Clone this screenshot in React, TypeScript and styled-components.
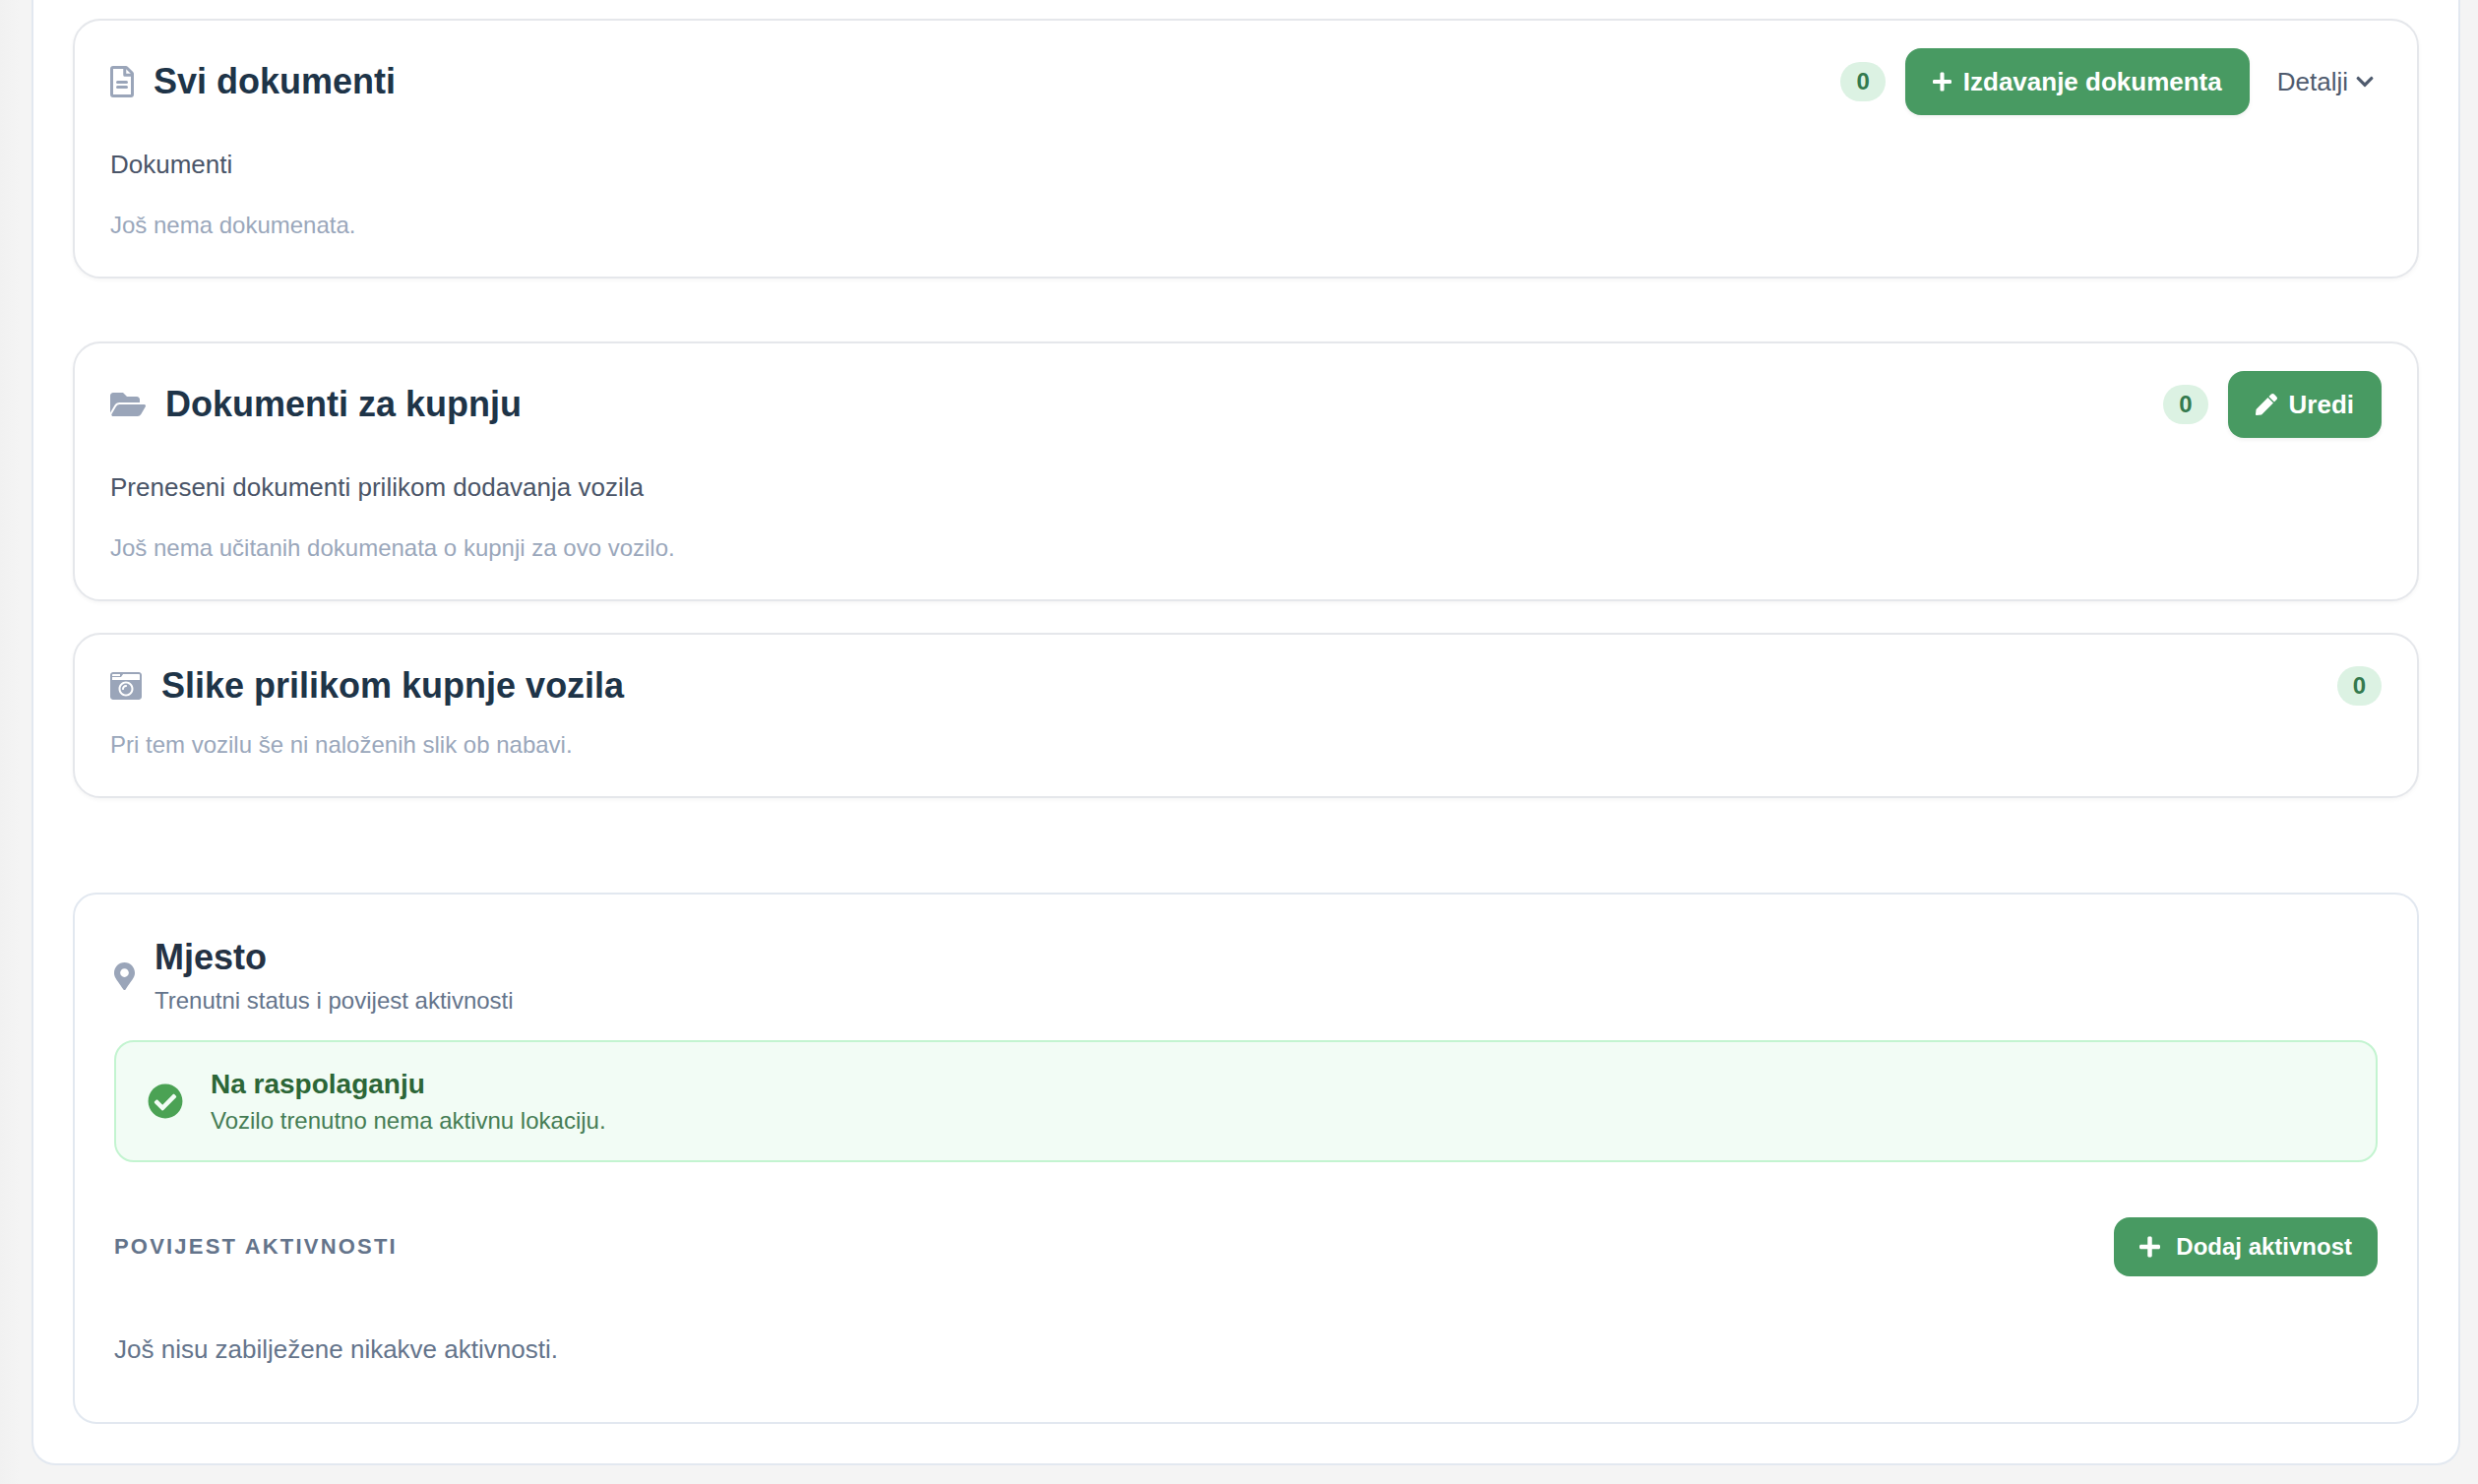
import React from 'react';
import styled, { createGlobalStyle } from 'styled-components';
import { FaFolderOpen, FaCameraRetro, FaMapMarkerAlt, FaCheckCircle, FaPlus, FaPen, FaChevronDown } from 'react-icons/fa';

const GlobalStyle = createGlobalStyle`
  *, *::before, *::after { box-sizing: border-box; }
  body {
    margin: 0;
    background: #f4f4f4;
    font-family: "Liberation Sans", Arial, sans-serif;
    color: #4a5568;
  }
  h2, h3, p { margin: 0; }
`;

const Page = styled.div`
  padding: 0 18px 19px 32px;
  background: linear-gradient(90deg, #f1f1f1 0, #f4f4f4 20px);
`;

const Panel = styled.main`
  display: flex;
  flex-direction: column;
  padding: 19px 40px 40px;
  background: #fff;
  border: 2px solid #e2e8f0;
  border-top: 0;
  border-radius: 0 0 24px 24px;
`;

const Card = styled.section<{ $after: number }>`
  padding: 28px 36px 34px;
  margin-bottom: ${(p) => p.$after}px;
  background: #fff;
  border: 2px solid #e5e7eb;
  border-radius: 28px;
  box-shadow: 0 2px 4px rgba(0, 0, 0, 0.04);
`;

const LocationCard = styled.section`
  padding: 40px;
  background: #fff;
  border: 2px solid #e2e8f0;
  border-radius: 24px;
`;

const Header = styled.header`
  display: flex;
  align-items: center;
  justify-content: space-between;
`;

const Title = styled.h2`
  display: flex;
  align-items: center;
  gap: 20px;
  font-size: 36px;
  line-height: 48px;
  font-weight: 700;
  color: #1e3448;
`;

const PlaceTitle = styled.h2`
  font-size: 36px;
  line-height: 48px;
  font-weight: 700;
  color: #243244;
`;

const TitleIcon = styled.span<{ $width: number; $height: number }>`
  display: flex;
  color: #9aa5b9;
  svg {
    width: ${(p) => p.$width}px;
    height: ${(p) => p.$height}px;
  }
`;

const Actions = styled.div`
  display: flex;
  align-items: center;
  gap: 20px;
`;

const Badge = styled.span`
  padding: 0 16px;
  border-radius: 20px;
  background: #dcf2e3;
  color: #347a4e;
  font-size: 24px;
  line-height: 40px;
  font-weight: 700;
`;

const Button = styled.button<{ $compact?: boolean; $iconWidth: number }>`
  display: inline-flex;
  align-items: center;
  gap: ${(p) => (p.$compact ? 16 : 12)}px;
  height: ${(p) => (p.$compact ? 60 : 68)}px;
  padding: 0 ${(p) => (p.$compact ? 26 : 28)}px;
  border: 0;
  border-radius: 16px;
  background: #489a62;
  color: #fff;
  font: 700 ${(p) => (p.$compact ? 24 : 26)}px "Liberation Sans", Arial, sans-serif;
  box-shadow: ${(p) => (p.$compact ? 'none' : '0 2px 4px rgba(0, 0, 0, 0.06)')};
  svg {
    width: ${(p) => p.$iconWidth}px;
    height: ${(p) => (p.$compact ? 24 : 22)}px;
  }
`;

const DetailsButton = styled.button`
  display: inline-flex;
  align-items: center;
  gap: 8px;
  padding: 8px;
  border: 0;
  background: none;
  color: #4f5b6e;
  font: 400 26px "Liberation Sans", Arial, sans-serif;
  svg {
    width: 18px;
    height: 20px;
  }
`;

const Lead = styled.p`
  margin-top: 32px;
  font-size: 26px;
  line-height: 36px;
  color: #4a5568;
`;

const Muted = styled.p<{ $gap: number }>`
  margin-top: ${(p) => p.$gap}px;
  font-size: 24px;
  line-height: 36px;
  color: #9aa7bb;
`;

const Place = styled.header`
  display: flex;
  align-items: center;
  gap: 20px;
`;

const PlaceText = styled.p`
  margin-top: 2px;
  font-size: 24px;
  line-height: 36px;
  color: #64748b;
`;

const Status = styled.div`
  display: flex;
  align-items: center;
  gap: 28px;
  margin-top: 22px;
  padding: 23px 32px;
  border: 2px solid #c3f4d0;
  border-radius: 20px;
  background: #f2fcf5;
  color: #4ba254;
`;

const StatusTitle = styled.h3`
  font-size: 28px;
  line-height: 40px;
  color: #2c6637;
`;

const StatusText = styled.p`
  font-size: 24px;
  line-height: 34px;
  color: #457c54;
`;

const HistoryHeader = styled(Header)`
  margin-top: 56px;
`;

const HistoryTitle = styled.h3`
  font-size: 22px;
  letter-spacing: 0.1em;
  text-transform: uppercase;
  color: #64748b;
`;

const Empty = styled.p`
  margin-top: 56px;
  padding-bottom: 16px;
  font-size: 26px;
  line-height: 36px;
  color: #64748b;
`;

function FileLinesIcon() {
  return (
    <svg viewBox="0 0 384 512" fill="none" stroke="currentColor" strokeWidth="48" aria-hidden="true">
      <path d="M48 24H254a24 24 0 0 1 17 7L353 113a24 24 0 0 1 7 17V464a24 24 0 0 1-24 24H48a24 24 0 0 1-24-24V48a24 24 0 0 1 24-24Z" />
      <path d="M236 24V148H360" strokeLinejoin="round" />
      <path d="M120 264H264M120 344H264" strokeLinecap="round" />
    </svg>
  );
}

export default function App() {
  return (
    <Page>
      <GlobalStyle />
      <Panel>
        <Card $after={64}>
          <Header>
            <Title><TitleIcon $width={24} $height={32}><FileLinesIcon /></TitleIcon>Svi dokumenti</Title>
            <Actions>
              <Badge>0</Badge>
              <Button type="button" $iconWidth={19}><FaPlus />Izdavanje dokumenta</Button>
              <DetailsButton type="button">Detalji<FaChevronDown /></DetailsButton>
            </Actions>
          </Header>
          <Lead>Dokumenti</Lead>
          <Muted $gap={26}>Još nema dokumenata.</Muted>
        </Card>
        <Card $after={32}>
          <Header>
            <Title><TitleIcon $width={36} $height={32}><FaFolderOpen /></TitleIcon>Dokumenti za kupnju</Title>
            <Actions>
              <Badge>0</Badge>
              <Button type="button" $iconWidth={22}><FaPen />Uredi</Button>
            </Actions>
          </Header>
          <Lead>Preneseni dokumenti prilikom dodavanja vozila</Lead>
          <Muted $gap={26}>Još nema učitanih dokumenata o kupnji za ovo vozilo.</Muted>
        </Card>
        <Card $after={96}>
          <Header>
            <Title><TitleIcon $width={32} $height={32}><FaCameraRetro /></TitleIcon>Slike prilikom kupnje vozila</Title>
            <Badge>0</Badge>
          </Header>
          <Muted $gap={18}>Pri tem vozilu še ni naloženih slik ob nabavi.</Muted>
        </Card>
        <LocationCard>
          <Place>
            <TitleIcon $width={21} $height={28}><FaMapMarkerAlt /></TitleIcon>
            <div>
              <PlaceTitle>Mjesto</PlaceTitle>
              <PlaceText>Trenutni status i povijest aktivnosti</PlaceText>
            </div>
          </Place>
          <Status>
            <FaCheckCircle size={36} />
            <div>
              <StatusTitle>Na raspolaganju</StatusTitle>
              <StatusText>Vozilo trenutno nema aktivnu lokaciju.</StatusText>
            </div>
          </Status>
          <HistoryHeader>
            <HistoryTitle>Povijest aktivnosti</HistoryTitle>
            <Button type="button" $compact $iconWidth={21}><FaPlus />Dodaj aktivnost</Button>
          </HistoryHeader>
          <Empty>Još nisu zabilježene nikakve aktivnosti.</Empty>
        </LocationCard>
      </Panel>
    </Page>
  );
}
